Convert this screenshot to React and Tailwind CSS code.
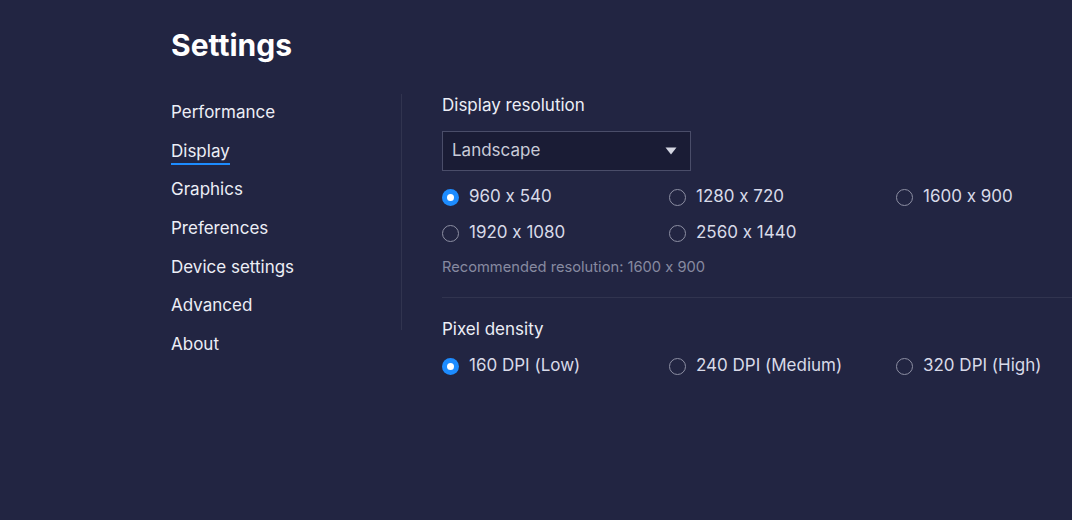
import React, { useState } from 'react';

const navItems = ['Performance', 'Display', 'Graphics', 'Preferences', 'Device settings', 'Advanced', 'About'];
const resolutions = ['960 x 540', '1280 x 720', '1600 x 900', '1920 x 1080', '2560 x 1440'];
const densities = ['160 DPI (Low)', '240 DPI (Medium)', '320 DPI (High)'];

function Radio({ label, checked, onClick }) {
    return (
        <button onClick={onClick} className="flex items-center h-[20px] text-left">
            {checked ? (
                <span className="w-[17px] h-[17px] rounded-full bg-[#1d8cff] flex items-center justify-center shrink-0">
                    <span className="w-[7px] h-[7px] rounded-full bg-white"></span>
                </span>
            ) : (
                <span className="w-[17px] h-[17px] rounded-full border-[1.5px] border-[#8d8fa3] shrink-0"></span>
            )}
            <span className="ml-[10px] text-[17px] text-[#d8dae8]">{label}</span>
        </button>
    );
}

export default function App() {
    const [active, setActive] = useState('Display');
    const [res, setRes] = useState('960 x 540');
    const [dpi, setDpi] = useState('160 DPI (Low)');

    return (
        <div
            className="w-[1072px] h-[520px] bg-[#222542] overflow-hidden"
            style={{ fontFamily: 'Inter, "Noto Sans", sans-serif', fontFeatureSettings: '"calt" 0' }}
        >
            <div className="pl-[171px] pt-[25px]">
                <h1 className="text-[30px] font-bold text-white leading-[40px]">Settings</h1>
            </div>
            <div className="flex pl-[171px] mt-[29px]">
                <nav className="w-[230px] flex flex-col pt-[7px]">
                    {navItems.map((item) => (
                        <button
                            key={item}
                            onClick={() => setActive(item)}
                            className="text-left h-[38.67px] flex items-start"
                        >
                            <span className={`text-[17px] leading-[22px] text-[#eceef6] pb-[1px] ${active === item ? 'border-b-2 border-[#1d8cff]' : ''}`}>
                                {item}
                            </span>
                        </button>
                    ))}
                </nav>
                <div className="w-px bg-[#31344f] h-[236px]"></div>
                <div className="flex-1 pl-[40px]">
                    <h2 className="text-[17px] text-[#eceef6] leading-[22px]">Display resolution</h2>
                    <div className="mt-[15px] w-[249px] h-[40px] bg-[#1a1c35] border border-[#4a4d69] flex items-center justify-between px-[9px]">
                        <span className="text-[17px] text-[#c9cbd8]">Landscape</span>
                        <svg width="12" height="8" viewBox="0 0 12 8" className="mr-[4px]">
                            <path d="M0.5 0.5 L11.5 0.5 L6 7.5 Z" fill="#d4d6e2" />
                        </svg>
                    </div>
                    <div className="grid grid-cols-[227px_227px_1fr] gap-y-[16px] mt-[16px]">
                        {resolutions.map((r) => (
                            <Radio key={r} label={r} checked={res === r} onClick={() => setRes(r)} />
                        ))}
                    </div>
                    <p className="mt-[14px] text-[14.7px] leading-[20px] text-[#878aa0]">Recommended resolution: 1600 x 900</p>
                    <div className="h-px bg-[#31344f] mt-[20px]"></div>
                    <h2 className="text-[17px] text-[#eceef6] leading-[22px] mt-[20px]">Pixel density</h2>
                    <div className="grid grid-cols-[227px_227px_1fr] mt-[16px]">
                        {densities.map((d) => (
                            <Radio key={d} label={d} checked={dpi === d} onClick={() => setDpi(d)} />
                        ))}
                    </div>
                </div>
            </div>
        </div>
    );
}
